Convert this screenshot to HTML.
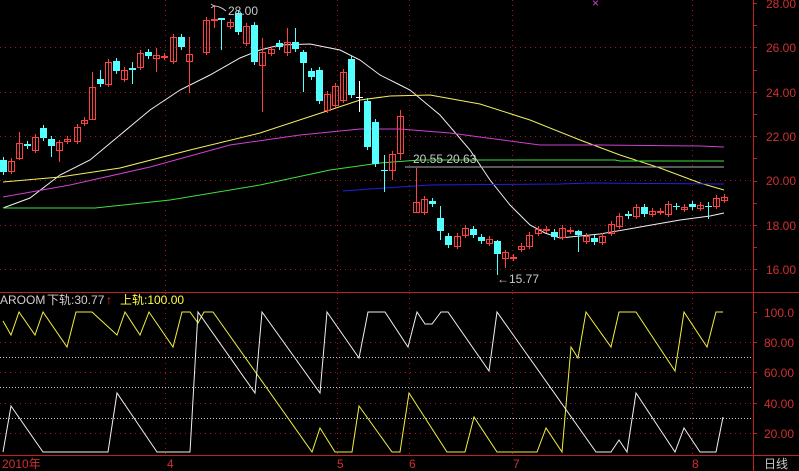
<!DOCTYPE html>
<html><head><meta charset="utf-8"><style>
html,body{margin:0;padding:0;background:#000;width:799px;height:471px;overflow:hidden}
svg{display:block}
text{font-family:"Liberation Sans","Noto Sans CJK SC",sans-serif;font-size:12px}
</style></head><body>
<svg id="s" width="799" height="471" xmlns="http://www.w3.org/2000/svg">
<rect width="799" height="471" fill="#000"/>
<g id="grid" stroke="#a01818" stroke-dasharray="1,4" stroke-width="1"></g>
<g stroke="#c02020" stroke-width="1" fill="none">
<line x1="0" y1="292.5" x2="799" y2="292.5"/>
<line x1="0" y1="455.5" x2="799" y2="455.5"/>
<line x1="753.5" y1="0" x2="753.5" y2="471"/>
</g>
<g id="ma" fill="none" stroke-width="1"></g>
<g id="cd"></g>
<g id="ar" fill="none" stroke-width="1"></g>
<g id="ax" fill="#d03030"></g>
<text x="228" y="15" fill="#c8c8c8">28.00</text>
<path d="M214 6 l-3 -2 M214 6 l-3 2 M214 6 q6 0 12 5" stroke="#c8c8c8" fill="none"/>
<text x="413" y="163" fill="#c8c8c8">20.55 20.63</text>
<text x="497" y="283" fill="#c8c8c8">←15.77</text>
<text x="592" y="7" fill="#d040d0" font-size="9">×</text>
<text x="0" y="304" fill="#d0d0d0">AROOM</text>
<text x="47" y="304" fill="#d0d0d0">下轨:30.77</text>
<text x="106" y="304" fill="#ff3030">↑</text>
<text x="120" y="304" fill="#ffff40">上轨:100.00</text>
<text x="2" y="468" fill="#d03030">2010年</text>
<text x="167" y="468" fill="#d03030">4</text>
<text x="337" y="468" fill="#d03030">5</text>
<text x="409" y="468" fill="#d03030">6</text>
<text x="513" y="468" fill="#d03030">7</text>
<text x="692" y="468" fill="#d03030">8</text>
<text x="764" y="468" fill="#c8c8c8">日线</text>
</svg>
<script>
var NS="http://www.w3.org/2000/svg";
function el(p,t,a){var e=document.createElementNS(NS,t);for(var k in a)e.setAttribute(k,a[k]);document.getElementById(p).appendChild(e);return e;}
// grid
[47,92,136,180,225,269].forEach(function(y){el('grid','line',{x1:0,y1:y+.5,x2:753,y2:y+.5});});
[165,337,409,512,692].forEach(function(x){el('grid','line',{x1:x+.5,y1:0,x2:x+.5,y2:292});el('grid','line',{x1:x+.5,y1:293,x2:x+.5,y2:455});});
[342,372,403,433].forEach(function(y){el('grid','line',{x1:0,y1:y+.5,x2:753,y2:y+.5});});
[357,387,418].forEach(function(y){el('grid','line',{x1:0,y1:y+.5,x2:753,y2:y+.5,stroke:'#c8c8c8','stroke-dasharray':'1,2'});});
// axis labels
var pl=[[3,"28.00"],[47,"26.00"],[92,"24.00"],[136,"22.00"],[180,"20.00"],[225,"18.00"],[269,"16.00"]];
pl.forEach(function(p){var t=el('ax','text',{x:766,y:p[0]+5});t.textContent=p[1];});
for(var y=3;y<292;y+=22.2){el('ax','line',{x1:753,y1:Math.round(y)+.5,x2:757,y2:Math.round(y)+.5,stroke:'#c02020'});}
[[312,"100.0"],[342,"80.00"],[372,"60.00"],[403,"40.00"],[433,"20.00"]].forEach(function(p){var t=el('ax','text',{x:764,y:p[0]+5});t.textContent=p[1];el('ax','line',{x1:753,y1:p[0]+.5,x2:757,y2:p[0]+.5,stroke:'#c02020'});});
// MAs
function pl2(g,pts,c){el(g,'polyline',{points:pts.map(function(p){return p.join(',')}).join(' '),stroke:c});}
pl2('ma',[[3,208],[30,198],[60,175],[90,160],[120,135],[150,110],[180,90],[210,75],[240,58],[260,50],[280,45],[310,44],[340,50],[360,60],[380,75],[400,85],[410,90],[440,115],[470,150],[490,180],[510,205],[530,225],[545,233],[560,238],[580,236],[600,234],[640,227],[680,220],[710,216],[724,213]],'#f0f0f0');
pl2('ma',[[3,182],[60,177],[120,168],[190,150],[260,133],[330,110],[360,100],[390,96],[430,95],[480,104],[530,120],[580,140],[620,155],[660,168],[700,183],[724,190]],'#f0f060');
pl2('ma',[[3,197],[70,185],[150,167],[230,145],[300,135],[360,129],[400,129],[450,133],[540,145],[600,145],[700,146],[724,147]],'#d040d0');
pl2('ma',[[3,208],[95,208],[170,200],[260,185],[330,170],[380,163],[420,160],[615,160],[620,161],[724,161]],'#40e040');
pl2('ma',[[405,167],[724,167]],'#b0b0b0');
pl2('ma',[[343,191],[370,189],[430,185],[560,184],[590,183],[724,184]],'#2020e0');
// candles [x,top,bot,up?,wt,wb]
var C=[[3,160,172,0],[11,161,171,1],[19,143,158,1,132,160],[27,144,146,0],[35,137,150,1],[43,128,138,0],[51,139,146,0,136,157],[59,142,150,1,140,162],[67,139,141,1],[77,127,141,1],[84,120,123,1],[92,87,119,1,72,119],[100,79,84,0,70,87],[108,62,84,1],[116,61,71,0],[124,70,79,1],[132,68,70,0,62,84],[140,53,67,1],[148,52,56,0],[156,55,58,1,48,72],[164,56,57,1],[173,37,61,1],[181,37,47,0],[189,54,61,1,37,93],[206,20,52,1],[214,19,20,1,5,28],[221,18,20,0,18,50],[230,22,26,1],[238,13,32,0],[246,26,43,1],[254,25,62,0],[262,52,65,1,38,112],[271,49,53,1],[279,43,47,0],[287,42,52,1,28,56],[295,42,49,0,28,52],[303,52,63,0,50,92],[311,71,77,0],[319,70,101,0],[327,94,110,1],[335,86,105,1],[343,72,100,1],[351,59,95,0],[359,97,98,2,81,112],[367,101,147,0],[375,122,164,0],[384,170,171,0,155,192],[392,154,170,1,151,180],[400,116,153,1,110,160],[416,202,212,1,168,212],[424,199,212,1],[432,201,204,0],[440,218,231,0,206,240],[448,236,245,0],[457,236,246,1],[465,228,235,1],[473,229,235,0],[481,237,241,0],[489,239,243,1],[497,241,254,0,240,275],[505,252,258,1,250,268],[513,257,258,1],[521,246,249,1],[529,235,246,1],[538,229,233,1],[546,229,230,1],[554,232,237,0],[562,228,237,1],[570,230,231,1],[578,231,235,0,230,252],[586,236,241,1],[594,238,242,0],[602,236,242,1],[611,224,233,1],[619,216,226,1],[628,214,216,0],[636,207,216,1],[644,207,214,0],[652,211,214,1],[660,211,212,1],[668,204,214,1],[676,206,207,0],[684,207,209,1],[692,204,207,0],[700,205,208,1],[708,206,207,0,202,219],[716,198,206,1],[724,197,200,1]];
C.forEach(function(c){var x=c[0],t=c[1],b=c[2],u=c[3],wt=c[4]!=null?c[4]:t-3,wb=c[5]!=null?c[5]:b+3;
var col=u==1?'#ff4040':(u==2?'#ffffff':'#54ffff');
el('cd','line',{x1:x+.5,y1:wt,x2:x+.5,y2:wb,stroke:col});
if(u==1)el('cd','rect',{x:x-2.5,y:t+.5,width:6,height:Math.max(1,b-t),fill:'none',stroke:col});
else el('cd','rect',{x:x-3,y:t,width:7,height:Math.max(1,b-t),fill:col});});
// aroon
pl2('ar',[[3,321],[11,335],[19,312],[35,335],[43,312],[67,347],[76,312],[92,312],[117,335],[125,312],[140,335],[149,312],[173,347],[182,312],[190,312],[198,323],[204,312],[213,312],[312,452],[320,428],[335,452],[352,452],[359,406],[392,452],[400,452],[409,393],[447,452],[465,452],[474,417],[497,452],[537,452],[546,428],[562,452],[571,347],[578,358],[586,312],[611,347],[619,312],[636,312],[675,371],[684,312],[707,347],[716,312],[723,312]],'#f0f040');
pl2('ar',[[3,452],[11,406],[43,452],[108,452],[117,393],[157,452],[190,452],[198,312],[255,393],[262,312],[320,393],[327,312],[359,358],[368,312],[385,312],[408,347],[417,312],[425,324],[432,324],[441,312],[448,312],[489,371],[497,312],[596,452],[611,452],[619,440],[627,452],[636,393],[675,452],[684,428],[700,452],[716,452],[723,417]],'#f0f0f0');
</script>
</body></html>
